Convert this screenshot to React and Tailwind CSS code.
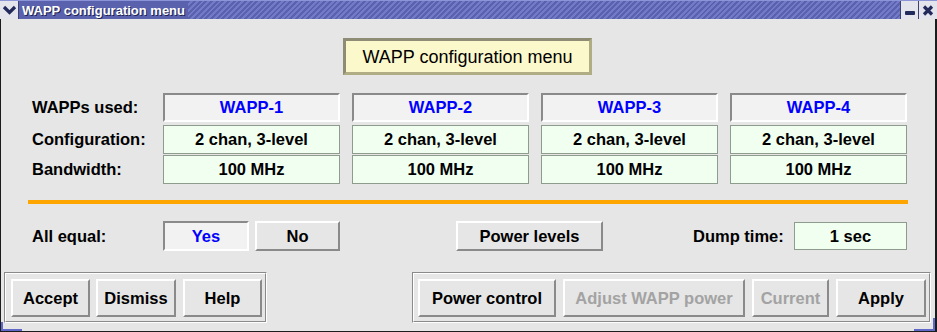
const raised = 'border-2 border-t-white border-l-white border-b-[#8a8a8a] border-r-[#8a8a8a]';
const sunken = 'border-2 border-t-[#8a8a8a] border-l-[#8a8a8a] border-b-white border-r-white';
const entry = 'border border-[#8e9c8e] bg-[#f0fff0]';

const wapps = ['WAPP-1', 'WAPP-2', 'WAPP-3', 'WAPP-4'];

function TitleBar() {
  return (
    <div className="h-[19px] flex shrink-0 border-t border-t-[#8c94d8] bg-[#5a62ae]">
      <div className="w-[19px] h-full bg-[#e4e4ec] border-r border-r-[#3c4172] flex items-center justify-center">
        <svg width="15" height="10" viewBox="0 0 15 10">
          <path d="M2 2 L7.5 7.5 L13 2" fill="none" stroke="#222a5c" strokeWidth="3.2" />
        </svg>
      </div>
      <div className="pl-[3px] pr-[3px] flex items-center text-white font-bold text-[13px] leading-none [text-shadow:1px_1px_0_#1e2350]">
        WAPP configuration menu
      </div>
      <div className="flex-1 h-full bg-[repeating-linear-gradient(135deg,#5a62ae_0px,#5a62ae_2px,#737bc8_2px,#737bc8_4px)]" />
      <div className="w-[18px] h-full bg-[#e4e4ec] border-l border-l-[#3c4172] flex items-end justify-center pb-[4px]">
        <div className="w-[10px] h-[4px] rounded-[1px] bg-[#222a5c]" />
      </div>
      <div className="w-[19px] h-full bg-[#e4e4ec] border-l border-l-[#3c4172] flex items-center justify-center">
        <svg width="12" height="11" viewBox="0 0 12 11">
          <path d="M2 1.5 L10 9.5 M10 1.5 L2 9.5" stroke="#222a5c" strokeWidth="3.2" />
        </svg>
      </div>
    </div>
  );
}

function Btn({ w, children, disabled }) {
  return (
    <div
      className={`${w} h-full ${raised} bg-[#e6e6e6] flex items-center justify-center ${
        disabled ? 'text-[#a3a3a3]' : 'text-black'
      }`}
    >
      {children}
    </div>
  );
}

function Frame({ w, children }) {
  return (
    <div className={`${w} h-[51px] border border-t-[#8a8a8a] border-l-[#8a8a8a] border-b-white border-r-white`}>
      <div className="w-full h-full border border-t-white border-l-white border-b-[#8a8a8a] border-r-[#8a8a8a] pt-[5px] pb-[4px] flex">
        {children}
      </div>
    </div>
  );
}

export default function App() {
  return (
    <div className="w-[937px] h-[332px] flex flex-col bg-[#e6e6e6] relative overflow-hidden font-['Liberation_Sans',Arial,sans-serif] font-bold text-[16.5px] leading-none text-black">
      <TitleBar />

      <div className="flex-1 flex flex-col border-l border-l-[#1c1c1c] border-r-2 border-r-[#1c1c1c] border-b border-b-[#1c1c1c]">
        <div className="mt-[19px] ml-[342px] w-[249px] h-[37px] border-[3px] border-t-[#8e8c74] border-l-[#8e8c74] border-b-[#b0ac84] border-r-[#b0ac84] bg-[#fbf8cc] flex items-center justify-center font-normal text-[18px]">
          WAPP configuration menu
        </div>

        <div className="mt-[18px] pl-[31px] flex flex-col">
          <div className="h-[29px] flex items-center">
            <div className="w-[131px]">WAPPs used:</div>
            <div className="flex gap-[12px] h-full">
              {wapps.map((name) => (
                <div key={name} className={`w-[177px] h-full ${sunken} bg-[#f2f2f2] flex items-center justify-center text-[#0000ff]`}>
                  {name}
                </div>
              ))}
            </div>
          </div>
          <div className="mt-[3px] h-[29px] flex items-center">
            <div className="w-[131px]">Configuration:</div>
            <div className="flex gap-[12px] h-full">
              {wapps.map((name) => (
                <div key={name} className={`w-[177px] h-full ${entry} flex items-center justify-center`}>
                  2 chan, 3-level
                </div>
              ))}
            </div>
          </div>
          <div className="mt-[1px] h-[29px] flex items-center">
            <div className="w-[131px]">Bandwidth:</div>
            <div className="flex gap-[12px] h-full">
              {wapps.map((name) => (
                <div key={name} className={`w-[177px] h-full ${entry} flex items-center justify-center`}>
                  100 MHz
                </div>
              ))}
            </div>
          </div>
        </div>

        <div className="mt-[16px] ml-[27px] w-[880px] h-[4px] bg-[#ffa500]" />

        <div className="mt-[17px] pl-[31px] h-[30px] flex items-center">
          <div className="w-[131px]">All equal:</div>
          <div className={`w-[86px] h-full ${sunken} bg-[#f2f2f2] flex items-center justify-center text-[#0000ff]`}>Yes</div>
          <div className="ml-[6px] h-full flex">
            <Btn w="w-[85px]">No</Btn>
          </div>
          <div className="ml-[116px] h-full flex">
            <Btn w="w-[147px]">Power levels</Btn>
          </div>
          <div className="ml-[90px] w-[101px]">Dump time:</div>
          <div className={`w-[113px] h-[28px] ${entry} flex items-center justify-center`}>1 sec</div>
        </div>

        <div className="mt-[21px] ml-[3px] flex">
          <Frame w="w-[263px]">
            <div className="pl-[5px] flex gap-[6px] h-full">
              <Btn w="w-[79px]">Accept</Btn>
              <Btn w="w-[80px]">Dismiss</Btn>
              <div className="ml-[1px] h-full flex">
                <Btn w="w-[79px]">Help</Btn>
              </div>
            </div>
          </Frame>
          <div className="ml-[145px]">
            <Frame w="w-[519px]">
              <div className="pl-[4px] flex gap-[7px] h-full">
                <Btn w="w-[138px]">Power control</Btn>
                <Btn w="w-[182px]" disabled>Adjust WAPP power</Btn>
                <Btn w="w-[77px]" disabled>Current</Btn>
                <Btn w="w-[90px]">Apply</Btn>
              </div>
            </Frame>
          </div>
        </div>
      </div>

      <div className="absolute left-[1px] bottom-[1px] w-[21px] h-[9px] border-l-2 border-b-2 border-[#6068c8]" />
      <div className="absolute right-[2px] bottom-[1px] w-[21px] h-[13px] border-r-2 border-b-2 border-[#6068c8]" />
    </div>
  );
}
